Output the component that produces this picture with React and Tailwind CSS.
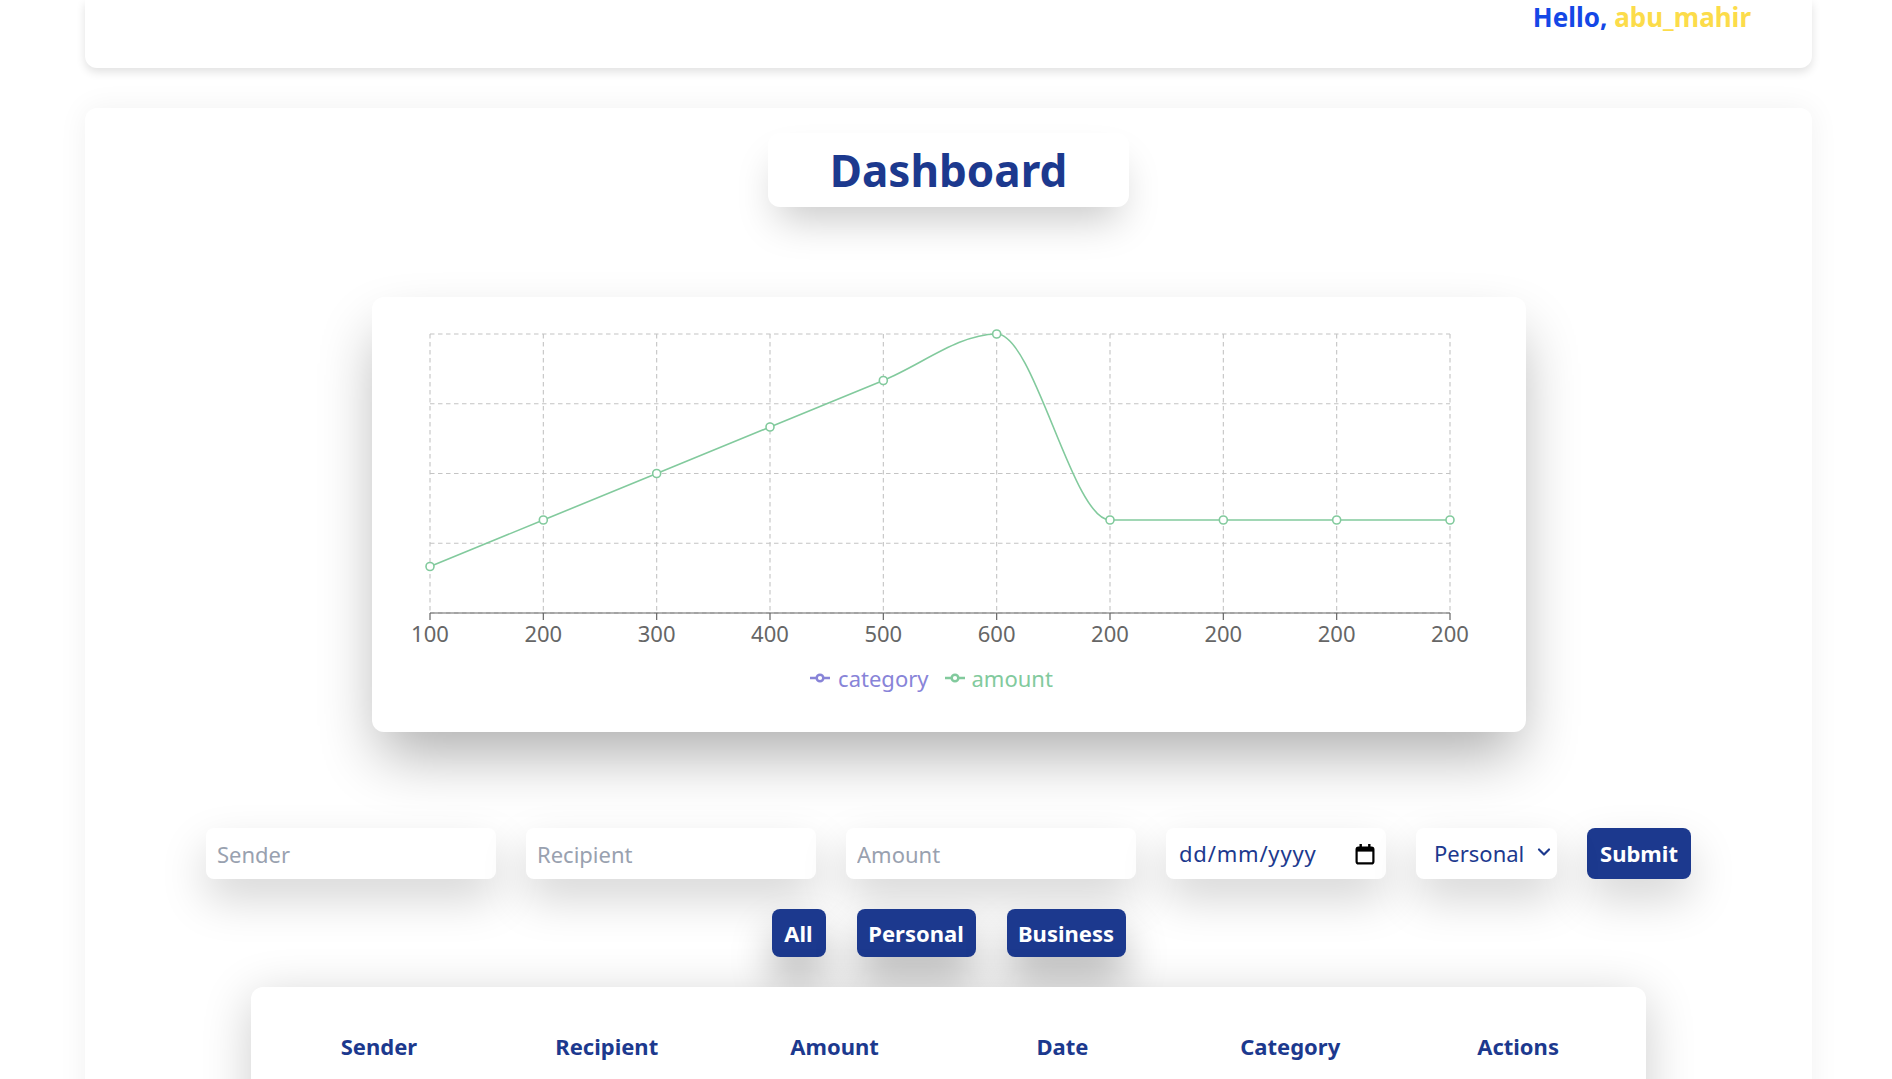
import { ChevronDown } from "lucide-react";

const values = [100, 200, 300, 400, 500, 600, 200, 200, 200, 200];

const PLOT = { left: 58, right: 1078, top: 37, bottom: 316 };
const xAt = (i) => PLOT.left + (i * (PLOT.right - PLOT.left)) / (values.length - 1);
const yAt = (v) => PLOT.bottom - (v / 600) * (PLOT.bottom - PLOT.top);

// monotone-x curve, same maths as d3/recharts "monotone"
function monotonePath(pts) {
  const n = pts.length;
  const sign = (v) => (v < 0 ? -1 : 1);
  const t = new Array(n).fill(0);
  for (let i = 1; i < n - 1; i++) {
    const [x0, y0] = pts[i - 1];
    const [x1, y1] = pts[i];
    const [x2, y2] = pts[i + 1];
    const h0 = x1 - x0;
    const h1 = x2 - x1;
    const s0 = (y1 - y0) / h0;
    const s1 = (y2 - y1) / h1;
    const p = (s0 * h1 + s1 * h0) / (h0 + h1);
    t[i] = (sign(s0) + sign(s1)) * Math.min(Math.abs(s0), Math.abs(s1), 0.5 * Math.abs(p)) || 0;
  }
  const s = (a, b) => (pts[b][1] - pts[a][1]) / (pts[b][0] - pts[a][0]);
  t[0] = (3 * s(0, 1) - t[1]) / 2;
  t[n - 1] = (3 * s(n - 2, n - 1) - t[n - 2]) / 2;
  let d = `M${pts[0][0]},${pts[0][1]}`;
  for (let i = 0; i < n - 1; i++) {
    const [x0, y0] = pts[i];
    const [x1, y1] = pts[i + 1];
    const dx = (x1 - x0) / 3;
    d += `C${x0 + dx},${y0 + dx * t[i]},${x1 - dx},${y1 - dx * t[i + 1]},${x1},${y1}`;
  }
  return d;
}

function LegendIcon({ color }) {
  return (
    <svg width="20" height="20" viewBox="0 0 32 32">
      <path
        strokeWidth="4"
        fill="none"
        stroke={color}
        d="M0,16h10.667A5.333,5.333,0,1,1,21.333,16H32M21.333,16A5.333,5.333,0,1,1,10.667,16"
      />
    </svg>
  );
}

function Chart() {
  const pts = values.map((v, i) => [xAt(i), yAt(v)]);
  const hLines = [0, 150, 300, 450, 600].map(yAt);
  return (
    <div className="w-[1154px] h-[435px] bg-white rounded-xl shadow-[0_30px_60px_-8px_rgba(0,0,0,0.32)]">
      <svg width="1154" height="360" className="block">
        <g stroke="#c4c4c4" strokeDasharray="4.5 3.5" strokeWidth="1.1" fill="none">
          {hLines.map((y) => (
            <line key={y} x1={PLOT.left} x2={PLOT.right} y1={y} y2={y} />
          ))}
          {pts.map(([x], i) => (
            <line key={i} x1={x} x2={x} y1={PLOT.top} y2={PLOT.bottom} />
          ))}
        </g>
        <line x1={PLOT.left} x2={PLOT.right} y1={PLOT.bottom} y2={PLOT.bottom} stroke="#666" strokeWidth="1.2" />
        {pts.map(([x], i) => (
          <g key={i}>
            <line x1={x} x2={x} y1={PLOT.bottom} y2={PLOT.bottom + 7} stroke="#666" strokeWidth="1.2" />
            <text x={x} y={PLOT.bottom + 29} textAnchor="middle" fill="#666" fontSize="22">
              {values[i]}
            </text>
          </g>
        ))}
        <path d={monotonePath(pts)} fill="none" stroke="#82ca9d" strokeWidth="1.6" />
        {pts.map(([x, y], i) => (
          <circle key={i} cx={x} cy={y} r="4" fill="#fff" stroke="#82ca9d" strokeWidth="1.6" />
        ))}
      </svg>
      <div className="h-[42px] flex items-center justify-center pr-[34px] text-[22px] gap-[16px]">
        <div className="flex items-center gap-[8px] text-[#8884d8]">
          <LegendIcon color="#8884d8" />
          <span>category</span>
        </div>
        <div className="flex items-center gap-[7px] text-[#82ca9d]">
          <LegendIcon color="#82ca9d" />
          <span>amount</span>
        </div>
      </div>
    </div>
  );
}

function CalendarIcon() {
  return (
    <svg width="20" height="22" viewBox="0 0 20 22">
      <rect x="1.6" y="4.6" width="16.8" height="15.8" rx="2" fill="none" stroke="#000" strokeWidth="2.2" />
      <rect x="1.6" y="4.6" width="16.8" height="4" fill="#000" />
      <rect x="4.5" y="1" width="2.4" height="4" fill="#000" />
      <rect x="13.1" y="1" width="2.4" height="4" fill="#000" />
    </svg>
  );
}

const fieldShadow = "shadow-[0_20px_45px_rgba(0,0,0,0.17)]";

export default function App() {
  return (
    <div className="h-[1079px] overflow-hidden bg-white font-['Noto_Sans',sans-serif]">
      <header className="ml-[85px] mr-[80px] h-[68px] bg-white rounded-b-xl shadow-[0_4px_10px_rgba(0,0,0,0.12)] flex justify-end pr-[61px]">
        <span className="text-[26px] font-bold leading-[34px]">
          <span className="text-blue-700">Hello, </span>
          <span className="text-[#fcdc4a]">abu_mahir</span>
        </span>
      </header>

      <main className="ml-[85px] mr-[80px] mt-[40px] bg-white rounded-xl shadow-[0_0_30px_rgba(0,0,0,0.06)] pt-[25px] pb-10 flex flex-col items-center">
        <div className="w-[361px] h-[74px] bg-white rounded-xl shadow-[0_22px_40px_-10px_rgba(0,0,0,0.22)] flex items-center justify-center">
          <h1 className="text-[44px] font-bold leading-none text-blue-900">Dashboard</h1>
        </div>

        <div className="mt-[90px]">
          <Chart />
        </div>

        <div className="mt-[96px] flex gap-[30px] text-[22px]">
          <input
            placeholder="Sender"
            className={`w-[290px] h-[51px] rounded-lg bg-white px-[11px] outline-none placeholder:text-gray-400 ${fieldShadow}`}
          />
          <input
            placeholder="Recipient"
            className={`w-[290px] h-[51px] rounded-lg bg-white px-[11px] outline-none placeholder:text-gray-400 ${fieldShadow}`}
          />
          <input
            placeholder="Amount"
            className={`w-[290px] h-[51px] rounded-lg bg-white px-[11px] outline-none placeholder:text-gray-400 ${fieldShadow}`}
          />
          <div className={`w-[220px] h-[51px] rounded-lg bg-white pl-[13px] pr-[11px] flex items-center justify-between text-blue-900 ${fieldShadow}`}>
            <span className="tracking-[0.8px]">dd/mm/yyyy</span>
            <CalendarIcon />
          </div>
          <div className={`relative w-[141px] h-[51px] rounded-lg bg-white ${fieldShadow}`}>
            <select className="appearance-none w-full h-full bg-transparent pl-[18px] text-blue-900 outline-none">
              <option>Personal</option>
              <option>Business</option>
            </select>
            <ChevronDown className="absolute right-[3px] top-[14px] w-[20px] h-[20px] text-blue-900 pointer-events-none" strokeWidth={2.6} />
          </div>
          <button className={`w-[104px] h-[51px] rounded-lg bg-blue-900 text-white font-bold ${fieldShadow}`}>
            Submit
          </button>
        </div>

        <div className="mt-[30px] flex gap-[31px] text-[22px] font-bold text-white">
          <button className="w-[54px] h-[48px] rounded-lg bg-blue-900 shadow-[0_24px_40px_rgba(0,0,0,0.27)]">All</button>
          <button className="w-[119px] h-[48px] rounded-lg bg-blue-900 shadow-[0_24px_40px_rgba(0,0,0,0.27)]">Personal</button>
          <button className="w-[119px] h-[48px] rounded-lg bg-blue-900 shadow-[0_24px_40px_rgba(0,0,0,0.27)]">Business</button>
        </div>

        <div className="mt-[30px] w-[1395px] h-[300px] bg-white rounded-xl shadow-[0_10px_50px_rgba(0,0,0,0.2)] px-[14px] pt-[36px]">
          <table className="w-full table-fixed">
            <thead>
              <tr className="text-[22px] font-bold text-blue-900">
                <th className="h-[46px]">Sender</th>
                <th className="h-[46px]">Recipient</th>
                <th className="h-[46px]">Amount</th>
                <th className="h-[46px]">Date</th>
                <th className="h-[46px]">Category</th>
                <th className="h-[46px]">Actions</th>
              </tr>
            </thead>
          </table>
        </div>
      </main>
    </div>
  );
}
